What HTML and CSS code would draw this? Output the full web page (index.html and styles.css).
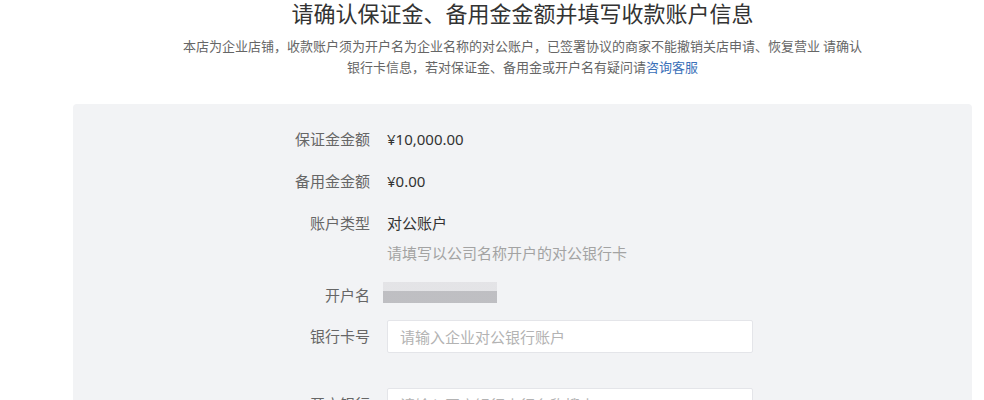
FILE: index.html
```html
<!DOCTYPE html>
<html lang="zh-CN">
<head>
<meta charset="utf-8">
<title>确认收款账户信息</title>
<link rel="stylesheet" href="styles.css">
</head>
<body>
<div class="page">
  <header class="head">
    <h1 class="title">请确认保证金、备用金金额并填写收款账户信息</h1>
    <p class="desc">本店为企业店铺，收款账户须为开户名为企业名称的对公账户，已签署协议的商家不能撤销关店申请、恢复营业 请确认银行卡信息，若对保证金、备用金或开户名有疑问请<a class="link" href="#">咨询客服</a></p>
  </header>
  <section class="panel">
    <div class="item item-gap">
      <div class="label">保证金金额</div>
      <div class="value">¥10,000.00</div>
    </div>
    <div class="item item-gap">
      <div class="label">备用金金额</div>
      <div class="value">¥0.00</div>
    </div>
    <div class="item item-gap-name">
      <div class="label">账户类型</div>
      <div class="value">
        <div>对公账户</div>
        <div class="hint">请填写以公司名称开户的对公银行卡</div>
      </div>
    </div>
    <div class="item item-gap-input">
      <div class="label">开户名</div>
      <div class="value"><span class="masked"></span></div>
    </div>
    <div class="item item-input item-gap-next">
      <div class="label">银行卡号</div>
      <div class="value"><input class="input" type="text" placeholder="请输入企业对公银行账户"></div>
    </div>
    <div class="item item-input">
      <div class="label">开户银行</div>
      <div class="value"><input class="input" type="text" placeholder="请输入开户银行支行名称搜索"></div>
    </div>
  </section>
</div>
</body>
</html>
```
FILE: styles.css
```css
* { box-sizing: border-box; }
html, body { margin: 0; padding: 0; background: #fff; }
body {
  font-family: "Noto Sans", "Noto Sans CJK SC", sans-serif;
  color: #333;
  overflow: hidden;
}
.page {
  width: 899px;
  margin-left: 73px;
}
.head {
  text-align: center;
}
.title {
  margin: 0;
  font-size: 22px;
  line-height: 26px;
  font-weight: 400;
  color: #333;
}
.desc {
  margin: 9px auto 0;
  max-width: 680px;
  font-family: "Noto Sans CJK SC", sans-serif;
  font-size: 13px;
  line-height: 21px;
  color: #666;
}
.link {
  color: #3a70b8;
  text-decoration: none;
}
.panel {
  margin-top: 27px;
  background: #f2f3f5;
  border-radius: 4px;
  padding-top: 24px;
  padding-bottom: 40px;
}
.item {
  display: grid;
  grid-template-columns: 297px 366px;
  column-gap: 17px;
  font-size: 15px;
  line-height: 22px;
}
.item-gap { margin-bottom: 20px; }
.item-gap-name { margin-bottom: 20px; }
.item-gap-input { margin-bottom: 14px; }
.item-gap-next { margin-bottom: 35px; }
.label {
  text-align: right;
  color: #666;
}
.value { color: #333; }
.hint {
  margin-top: 8px;
  color: #a3a3a3;
}
.masked {
  display: block;
  margin-left: -4px;
  margin-top: -2px;
  width: 114px;
  height: 21px;
  background: linear-gradient(to bottom, #e2e2e5 0, #e2e2e5 9px, #b9b9bd 9px, #b9b9bd 100%);
  opacity: 0.9;
}
.item-input .label { line-height: 33px; }
.input {
  display: block;
  width: 366px;
  height: 33px;
  padding: 0 12px;
  border: 1px solid #e4e5e9;
  border-radius: 2px;
  background: #fff;
  font-family: "Noto Sans", "Noto Sans CJK SC", sans-serif;
  font-size: 15px;
  color: #333;
  outline: none;
}
.input::placeholder { color: #b3b3b3; }
```
